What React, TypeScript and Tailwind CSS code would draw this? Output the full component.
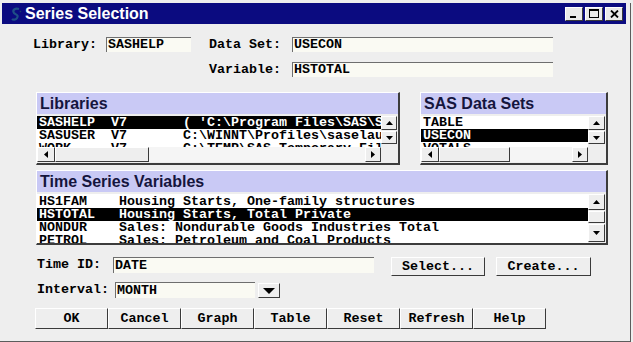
import React from "react";

const MONO = "font-['Liberation_Mono',monospace] font-bold text-[13.33px]";
const SANS = "font-['Liberation_Sans',Arial,sans-serif]";
const RAISED =
  "border border-t-white border-l-white border-r-[#3a3a3a] border-b-[#3a3a3a]";
const PANEL =
  "border-t border-l border-t-white border-l-white border-r-2 border-b-2 border-r-[#3c3c3c] border-b-[#3c3c3c]";
const HEADER = `h-[21px] bg-[#c9c9f5] flex items-center pl-[3px] text-[16px] font-bold text-[#15153d] ${SANS}`;

type Dir = "up" | "down" | "left" | "right";

function Tri({ dir }: { dir: Dir }) {
  const vertical = dir === "up" || dir === "down";
  const w = vertical ? 7 : 4;
  const h = vertical ? 4 : 7;
  const pts = {
    up: "0,4 3.5,0 7,4",
    down: "0,0 7,0 3.5,4",
    left: "4,0 4,7 0,3.5",
    right: "0,0 0,7 4,3.5",
  }[dir];
  return (
    <svg width={w} height={h} viewBox={`0 0 ${w} ${h}`}>
      <polygon points={pts} fill="#000" />
    </svg>
  );
}

function ArrowBtn({ dir, className }: { dir: Dir; className: string }) {
  return (
    <div className={`${RAISED} bg-[#eeeeee] flex items-center justify-center ${className}`}>
      <Tri dir={dir} />
    </div>
  );
}

function Row({ text, sel }: { text: string; sel?: boolean }) {
  return (
    <div
      className={`h-[13px] leading-[13px] whitespace-pre pl-[2px] ${MONO} ${
        sel ? "bg-black text-white" : "text-black"
      }`}
    >
      {text}
    </div>
  );
}

function Field({ w, h, text }: { w: string; h: string; text: string }) {
  return (
    <div
      className={`${w} ${h} bg-[#fafaf3] border-t border-l border-[#6e6e6e] pl-[1px] flex items-center ${MONO} text-black whitespace-pre`}
    >
      {text}
    </div>
  );
}

function Label({ className, text }: { className: string; text: string }) {
  return <div className={`${className} ${MONO} text-black whitespace-pre`}>{text}</div>;
}

function Btn({ className, text }: { className: string; text: string }) {
  return (
    <div className={`${RAISED} bg-[#eeeeee] flex items-center justify-center ${MONO} text-black ${className}`}>
      {text}
    </div>
  );
}

export default function App() {
  return (
    <div className="w-[633px] h-[342px] bg-[#eeeeee] overflow-hidden">
      <div className="w-[631px] h-[339px] border-r border-b border-[#5c5c5c]">
        {/* Title bar */}
        <div className="mt-[3px] ml-[2px] w-[624px] h-[21px] bg-[#0b0b80] flex items-center">
          <svg className="ml-[8px]" width="12" height="14" viewBox="0 0 12 14">
            <path d="M9 2 C5 1 2 3 4 6 C6 8 9 8 7 11 C6 13 3 13 2 12" stroke="#1f4f86" strokeWidth="2.2" fill="none" />
            <path d="M10 4 L11 5" stroke="#173f6a" strokeWidth="1.5" />
          </svg>
          <div className={`ml-[3px] text-white text-[16px] font-bold ${SANS}`}>Series Selection</div>
          <div className="ml-auto mr-[3px] flex gap-[2px]">
            <div className={`w-[18px] h-[14px] bg-[#e9e9e9] ${RAISED} relative`}>
              <div className="absolute left-[4px] top-[8px] w-[6px] h-[2px] bg-black" />
            </div>
            <div className={`w-[18px] h-[14px] bg-[#e9e9e9] ${RAISED} relative`}>
              <div className="absolute left-[3px] top-[1px] w-[10px] h-[9px] border border-t-2 border-black" />
            </div>
            <div className={`w-[18px] h-[14px] bg-[#e9e9e9] ${RAISED} flex items-center justify-center`}>
              <svg width="9" height="8" viewBox="0 0 9 8">
                <path d="M1 0.5 L8 7.5 M8 0.5 L1 7.5" stroke="#000" strokeWidth="1.8" />
              </svg>
            </div>
          </div>
        </div>

        {/* Library / Data Set */}
        <div className="mt-[13px] flex items-center h-[15px]">
          <Label className="ml-[33px] w-[73px]" text="Library:" />
          <Field w="w-[85px]" h="h-[15px]" text="SASHELP" />
          <Label className="ml-[18px] w-[83px]" text="Data Set:" />
          <Field w="w-[261px]" h="h-[15px]" text="USECON" />
        </div>
        {/* Variable */}
        <div className="mt-[10px] flex items-center h-[15px]">
          <Label className="ml-[209px] w-[83px]" text="Variable:" />
          <Field w="w-[261px]" h="h-[15px]" text="HSTOTAL" />
        </div>

        {/* Panels */}
        <div className="mt-[15px] flex">
          {/* Libraries */}
          <div className={`ml-[36px] w-[364px] h-[73px] ${PANEL}`}>
            <div className={HEADER}>Libraries</div>
            <div className="flex mt-[2px]">
              <div className="w-[344px] flex flex-col">
                <div className="h-[31px] bg-white overflow-hidden">
                  <Row sel text={"SASHELP  V7       ( 'C:\\Program Files\\SAS\\SAS System\\9.0\\core\\sashelp' )"} />
                  <Row text={"SASUSER  V7       C:\\WINNT\\Profiles\\saselau\\Personal\\My SAS Files"} />
                  <Row text={"WORK     V7       C:\\TEMP\\SAS Temporary Files\\_TD1234"} />
                </div>
                <div className="h-[15px] flex">
                  <ArrowBtn dir="left" className="w-[18px] h-full" />
                  <div className={`w-[94px] h-full bg-[#eeeeee] ${RAISED}`} />
                  <div className="flex-1 h-full bg-[#f5f5f5]" />
                  <ArrowBtn dir="right" className="w-[16px] h-full" />
                </div>
              </div>
              <div className="w-[16px] flex flex-col">
                <ArrowBtn dir="up" className="w-full h-[14px]" />
                <ArrowBtn dir="down" className="w-full h-[13px] mt-[1px]" />
              </div>
            </div>
          </div>

          {/* SAS Data Sets */}
          <div className={`ml-[20px] w-[188px] h-[73px] ${PANEL}`}>
            <div className={HEADER}>SAS Data Sets</div>
            <div className="flex mt-[2px]">
              <div className="w-[167px] flex flex-col">
                <div className="h-[31px] bg-white overflow-hidden">
                  <Row text="TABLE" />
                  <Row sel text="USECON" />
                  <Row text="VOTALS" />
                </div>
                <div className="h-[15px] flex">
                  <ArrowBtn dir="left" className="w-[18px] h-full" />
                  <div className={`w-[71px] h-full bg-[#eeeeee] ${RAISED}`} />
                  <div className="flex-1 h-full bg-[#f5f5f5]" />
                  <ArrowBtn dir="right" className="w-[16px] h-full" />
                </div>
              </div>
              <div className="w-[17px] flex flex-col">
                <ArrowBtn dir="up" className="w-full h-[14px]" />
                <ArrowBtn dir="down" className="w-full h-[13px] mt-[1px]" />
              </div>
            </div>
          </div>
        </div>

        {/* Time Series Variables */}
        <div className={`mt-[5px] ml-[36px] w-[572px] h-[75px] ${PANEL}`}>
          <div className={HEADER}>Time Series Variables</div>
          <div className="flex mt-[2px]">
            <div className="w-[551px] h-[49px] bg-white overflow-hidden pt-[1px]">
              <Row text="HS1FAM    Housing Starts, One-family structures" />
              <Row sel text="HSTOTAL   Housing Starts, Total Private" />
              <Row text="NONDUR    Sales: Nondurable Goods Industries Total" />
              <Row text="PETROL    Sales: Petroleum and Coal Products" />
            </div>
            <div className="w-[17px] flex flex-col">
              <ArrowBtn dir="up" className="w-full h-[16px]" />
              <div className={`w-full h-[12px] mt-[1px] bg-[#eeeeee] ${RAISED}`} />
              <ArrowBtn dir="down" className="w-full h-[18px] mt-[1px]" />
            </div>
          </div>
        </div>

        {/* Time ID */}
        <div className="mt-[12px] flex items-start">
          <Label className="ml-[37px] w-[76px] h-[16px] flex items-center" text="Time ID:" />
          <Field w="w-[261px]" h="h-[16px]" text="DATE" />
          <Btn className="ml-[17px] w-[94px] h-[19px]" text="Select..." />
          <Btn className="ml-[11px] w-[95px] h-[19px]" text="Create..." />
        </div>

        {/* Interval */}
        <div className="mt-[6px] flex items-start">
          <Label className="ml-[37px] w-[78px] h-[16px] flex items-center" text="Interval:" />
          <Field w="w-[140px]" h="h-[16px]" text="MONTH" />
          <div className={`ml-[3px] mt-[1px] w-[22px] h-[15px] ${RAISED} bg-[#eeeeee] flex items-center justify-center`}>
            <svg width="12" height="6" viewBox="0 0 12 6">
              <polygon points="0,0 12,0 6,6" fill="#000" />
            </svg>
          </div>
        </div>

        {/* Bottom buttons */}
        <div className="mt-[10px] ml-[35px] flex">
          {["OK", "Cancel", "Graph", "Table", "Reset", "Refresh", "Help"].map((t) => (
            <Btn key={t} className="w-[73px] h-[21px]" text={t} />
          ))}
        </div>
      </div>
    </div>
  );
}
